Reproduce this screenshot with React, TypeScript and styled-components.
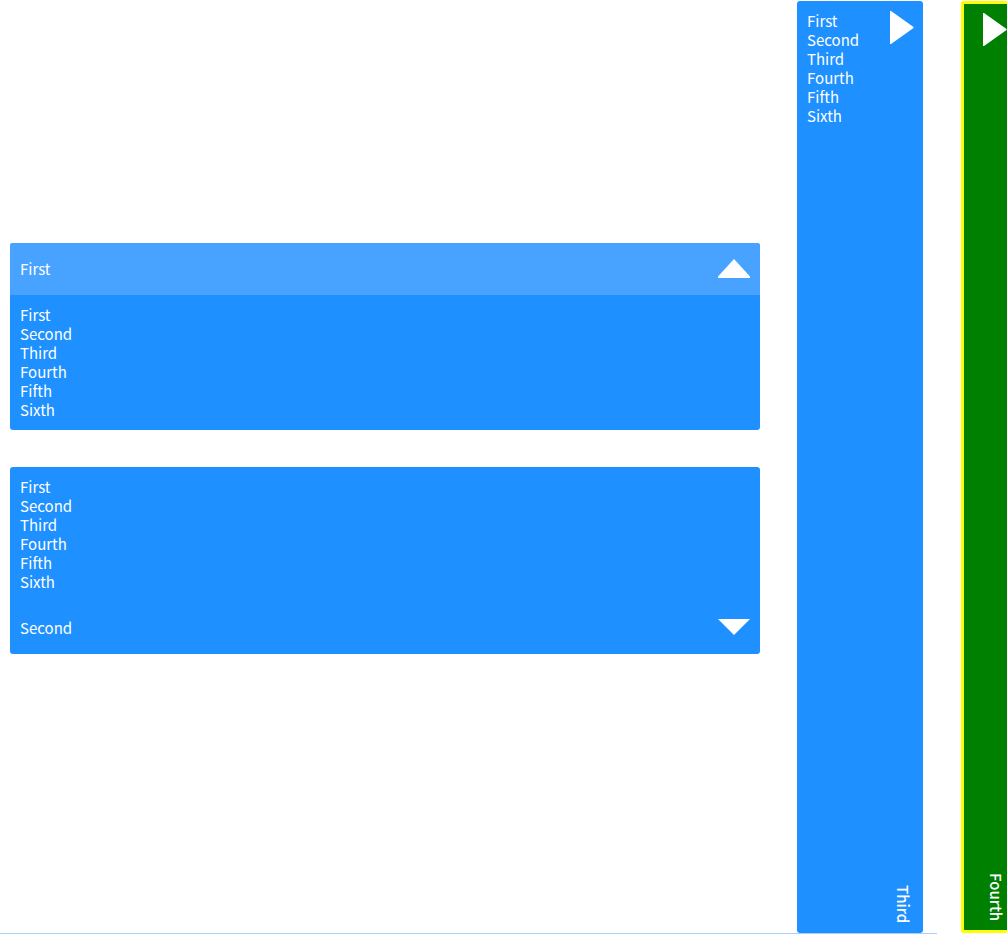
import React from 'react';
import styled, { createGlobalStyle, css } from 'styled-components';

const GlobalStyle = createGlobalStyle`
  * { box-sizing: border-box; }
  body {
    margin: 0;
    background: #fff;
    color: #fff;
    font-family: 'Noto Sans CJK SC', 'Open Sans', sans-serif;
    font-size: 15px;
    line-height: 19px;
    overflow: hidden;
  }
`;

const Page = styled.div`
  display: flex;
  min-height: 100vh;
`;

const Main = styled.main`
  display: flex;
  flex: 1;
  padding: 1px 14px 0 10px;
  border-bottom: 1px solid #a8d0fc;
`;

const Stack = styled.div`
  display: flex;
  flex: 1;
  flex-direction: column;
  justify-content: center;
  gap: 37px;
  margin-right: 37px;
  padding-bottom: 37px;
`;

const Expander = styled.section`
  display: flex;
  flex-direction: column;
  overflow: hidden;
  border-radius: 3px;
  background: #1e90ff;
`;

const Header = styled.button<{ $lit?: boolean }>`
  display: flex;
  align-items: center;
  justify-content: space-between;
  height: 52px;
  padding: 0 10px 2px;
  border: 0;
  background: ${({ $lit }) => ($lit ? '#48a2ff' : 'transparent')};
  color: inherit;
  font: inherit;
`;

const Items = styled.ul`
  flex: 1;
  margin: 0;
  padding: 10px 10px 11px;
  list-style: none;
`;

const SideExpander = styled.section<{ $green?: boolean }>`
  display: flex;
  width: 126px;
  border-radius: 3px;
  background: #1e90ff;
  ${({ $green }) =>
    $green &&
    css`
      width: 46px;
      margin: 1px 0 1px 24px;
      border: 3px solid #ff0;
      border-right: 0;
      border-radius: 3px 0 0 3px;
      background: #008000;
    `}
`;

const SideHeader = styled.button<{ $flush?: boolean }>`
  display: flex;
  flex-direction: column;
  align-items: flex-end;
  justify-content: space-between;
  margin-left: auto;
  padding: ${({ $flush }) => ($flush ? '9px 0' : '10px 9px')};
  border: 0;
  background: transparent;
  color: inherit;
  font: inherit;
  font-weight: 500;
`;

const SideLabel = styled.span`
  width: 22px;
  line-height: 22px;
  writing-mode: vertical-rl;
`;

const entries = ['First', 'Second', 'Third', 'Fourth', 'Fifth', 'Sixth'];

const shapes = {
  up: { width: 32, height: 19, d: 'M16 0 32 17.5V19H0V17.5Z' },
  down: { width: 32, height: 16, d: 'M0 0H32L16 16Z' },
  right: { width: 24, height: 34, d: 'M0 0H1L23.5 16V17L1 33H0Z' },
};

function Arrow({ direction }: { direction: keyof typeof shapes }) {
  const { width, height, d } = shapes[direction];
  return (
    <svg width={width} height={height} viewBox={`0 0 ${width} ${height}`} aria-hidden="true">
      <path d={d} fill="#fff" />
    </svg>
  );
}

function EntryList() {
  return (
    <Items>
      {entries.map((entry) => (
        <li key={entry}>{entry}</li>
      ))}
    </Items>
  );
}

export default function App() {
  return (
    <>
      <GlobalStyle />
      <Page>
        <Main>
          <Stack>
            <Expander>
              <Header $lit aria-expanded="true">
                First
                <Arrow direction="up" />
              </Header>
              <EntryList />
            </Expander>
            <Expander>
              <EntryList />
              <Header aria-expanded="true">
                Second
                <Arrow direction="down" />
              </Header>
            </Expander>
          </Stack>
          <SideExpander>
            <EntryList />
            <SideHeader aria-expanded="true">
              <Arrow direction="right" />
              <SideLabel>Third</SideLabel>
            </SideHeader>
          </SideExpander>
        </Main>
        <SideExpander $green>
          <SideHeader $flush aria-expanded="false">
            <Arrow direction="right" />
            <SideLabel>Fourth</SideLabel>
          </SideHeader>
        </SideExpander>
      </Page>
    </>
  );
}
